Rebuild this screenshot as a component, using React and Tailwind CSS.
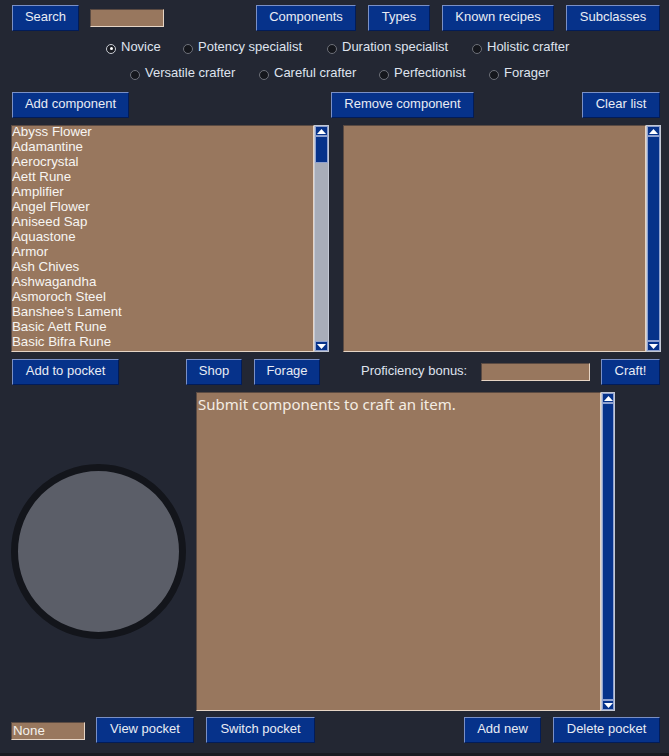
import React from "react";

const BTN =
    "flex items-center justify-center h-[26px] pb-[3px] bg-[#06328a] border border-t-[#7a90c6] border-l-[#7a90c6] border-b-[#021c58] border-r-[#021c58] text-[#e9ecf4] text-[13px] leading-none shrink-0";
const SUNKEN =
    "bg-[#98775e] border border-t-[#5a4a42] border-l-[#5a4a42] border-b-[#e6d5c6] border-r-[#e6d5c6]";

const COMPONENTS = [
    "Abyss Flower",
    "Adamantine",
    "Aerocrystal",
    "Aett Rune",
    "Amplifier",
    "Angel Flower",
    "Aniseed Sap",
    "Aquastone",
    "Armor",
    "Ash Chives",
    "Ashwagandha",
    "Asmoroch Steel",
    "Banshee's Lament",
    "Basic Aett Rune",
    "Basic Bifra Rune",
];

const Arrow = ( { down } ) => (
    <svg width="9" height="5" viewBox="0 0 9 5">
        { down ? (
            <path d="M0 0 H9 L4.5 5 Z" fill="#ffffff" />
        ) : (
            <path d="M0 5 L4.5 0 L9 5 Z" fill="#ffffff" />
        ) }
    </svg>
);

const ArrowBtn = ( { down } ) => (
    <div className="h-[10px] flex items-center justify-center bg-[#06328a] border border-[#8fa1cf]">
        <Arrow down={ down } />
    </div>
);

// tk style vertical scrollbar
const ScrollBar = ( { full, className } ) => (
    <div className={ `flex flex-col border border-[#c3c8d4] bg-[#a8adb9] ${ className }` }>
        <ArrowBtn />
        { full ? (
            <div className="flex-1 bg-[#06328a] border border-[#8fa1cf]" />
        ) : (
            <div className="flex-1 flex flex-col">
                <div className="h-[27px] bg-[#06328a] border border-[#8fa1cf]" />
            </div>
        ) }
        <ArrowBtn down />
    </div>
);

const Radio = ( { label, checked, className } ) => (
    <div className={ `flex items-center gap-[5px] shrink-0 ${ className }` }>
        { checked ? (
            <span className="w-[10px] h-[10px] mt-[3px] rounded-full border border-[#c9ccd4] bg-[#1b1d24] flex items-center justify-center">
                <span className="w-[3px] h-[3px] rounded-full bg-white" />
            </span>
        ) : (
            <span className="w-[10px] h-[10px] mt-[3px] rounded-full border border-[#6d7079] bg-[#15171d]" />
        ) }
        <span className="text-[#dfe3ee] text-[13px]">{ label }</span>
    </div>
);

const App = () =>
{
    return (
        <div className="w-[669px] h-[756px] bg-[#232733] flex flex-col overflow-hidden font-['Liberation_Sans',Arial,sans-serif] text-[13px]">
            {/* top buttons */ }
            <div className="flex mt-[5px] h-[26px]">
                <button className={ `${ BTN } ml-[12px] w-[67px]` }>Search</button>
                <div className={ `${ SUNKEN } ml-[11px] mt-[4px] w-[74px] h-[18px]` } />
                <div className="flex ml-auto mr-[9px] gap-[12px]">
                    <button className={ `${ BTN } w-[100px]` }>Components</button>
                    <button className={ `${ BTN } w-[62px]` }>Types</button>
                    <button className={ `${ BTN } w-[112px]` }>Known recipes</button>
                    <button className={ `${ BTN } w-[94px]` }>Subclasses</button>
                </div>
            </div>

            {/* subclass radios */ }
            <div className="flex mt-[6px] h-[20px] pl-[106px]">
                <Radio label="Novice" checked className="w-[77px]" />
                <Radio label="Potency specialist" className="w-[144px]" />
                <Radio label="Duration specialist" className="w-[145px]" />
                <Radio label="Holistic crafter" />
            </div>
            <div className="flex mt-[6px] h-[20px] pl-[130px]">
                <Radio label="Versatile crafter" className="w-[129px]" />
                <Radio label="Careful crafter" className="w-[120px]" />
                <Radio label="Perfectionist" className="w-[110px]" />
                <Radio label="Forager" />
            </div>

            <div className="flex mt-[9px] h-[26px]">
                <button className={ `${ BTN } ml-[12px] w-[117px]` }>Add component</button>
                <button className={ `${ BTN } ml-[202px] w-[143px]` }>Remove component</button>
                <button className={ `${ BTN } ml-auto mr-[9px] w-[78px]` }>Clear list</button>
            </div>

            {/* lists */ }
            <div className="flex mt-[7px] h-[227px]">
                <div className={ `${ SUNKEN } ml-[11px] w-[303px] overflow-hidden` }>
                    <div className="-mt-[2px] leading-[15px] text-[13.3px] text-[#f7f5f2]">
                        { COMPONENTS.map( ( c ) => (
                            <div key={ c } className="whitespace-nowrap">{ c }</div>
                        ) ) }
                    </div>
                </div>
                <ScrollBar className="w-[15px]" />
                <div className={ `${ SUNKEN } ml-[14px] w-[303px]` } />
                <ScrollBar full className="w-[15px]" />
            </div>

            <div className="flex items-center mt-[7px] h-[26px]">
                <button className={ `${ BTN } ml-[12px] w-[107px]` }>Add to pocket</button>
                <button className={ `${ BTN } ml-[67px] w-[56px]` }>Shop</button>
                <button className={ `${ BTN } ml-[12px] w-[66px]` }>Forage</button>
                <span className="ml-[41px] -mt-[3px] w-[120px] text-[#dfe3ee] shrink-0">Proficiency bonus:</span>
                <div className={ `${ SUNKEN } w-[109px] h-[18px] shrink-0` } />
                <button className={ `${ BTN } ml-[11px] w-[59px]` }>Craft!</button>
            </div>

            {/* main area */ }
            <div className="flex mt-[7px] h-[319px]">
                <div className="w-[196px] flex items-center justify-center">
                    <div className="w-[175px] h-[175px] rounded-full bg-[#5b5e68] border-[7px] border-[#13151b]" />
                </div>
                <div className={ `${ SUNKEN } w-[405px] pl-[1px] pt-[1px] font-['Noto_Sans',sans-serif] text-[15px] leading-[20px] text-[#f4ede4]` }>
                    Submit components to craft an item.
                </div>
                <ScrollBar full className="w-[14px]" />
            </div>

            <div className="flex mt-[6px] h-[26px]">
                <div className={ `${ SUNKEN } ml-[11px] mt-[5px] w-[74px] h-[18px] text-[#f4f1ec] text-[13.3px] leading-[15px] pl-[1px]` }>
                    None
                </div>
                <button className={ `${ BTN } ml-[11px] w-[98px]` }>View pocket</button>
                <button className={ `${ BTN } ml-[12px] w-[109px]` }>Switch pocket</button>
                <div className="flex ml-auto mr-[9px] gap-[12px]">
                    <button className={ `${ BTN } w-[77px]` }>Add new</button>
                    <button className={ `${ BTN } w-[107px]` }>Delete pocket</button>
                </div>
            </div>

            <div className="mt-auto h-[3px] bg-[#191b22]" />
        </div>
    );
};

export default App;
